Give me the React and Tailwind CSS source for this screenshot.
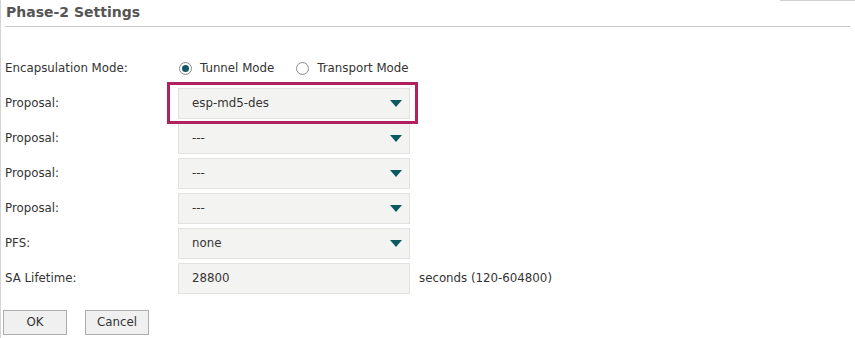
const font = { fontFamily: '"DejaVu Sans", Verdana, sans-serif' };

function Arrow() {
  return (
    <svg width="12" height="7" viewBox="0 0 12 7" className="shrink-0">
      <path d="M0 0 H12 L6 7 Z" fill="#0b5a61" />
    </svg>
  );
}

function Select({ value }) {
  return (
    <div className="flex h-[31px] w-[232px] items-center justify-between border border-[#e2e2e0] bg-[#f3f3f1] pl-[13px] pr-[7px]">
      <span>{value}</span>
      <Arrow />
    </div>
  );
}

function Radio({ checked, label }) {
  return (
    <label className="flex items-center gap-[8px]">
      <span className="flex h-[13px] w-[13px] items-center justify-center rounded-full border border-[#8a8a8a] bg-white">
        {checked && <span className="h-[7px] w-[7px] rounded-full bg-[#0d5a61]" />}
      </span>
      <span>{label}</span>
    </label>
  );
}

function Row({ label, children }) {
  return (
    <div className="flex h-[31px] items-center">
      <div className="w-[173px] shrink-0">{label}</div>
      {children}
    </div>
  );
}

export default function App() {
  return (
    <div className="h-[338px] w-[855px] overflow-hidden bg-white text-[11.8px] text-[#333]" style={font}>
      <div className="relative h-full border-l border-[#d4d4d4]">
        <div className="absolute right-0 top-0 h-px w-[75px] bg-[#d0d0d0]" />
        <div className="mx-[4px] mr-[5px] border-b border-[#c8c8c8] pb-[3px] pl-px pt-[2px] text-[14px] font-bold text-[#555]">
          Phase-2 Settings
        </div>
        <div className="flex flex-col gap-[4px] pl-[4px] pt-[26px]">
          <Row label="Encapsulation Mode:">
            <div className="flex items-center gap-[22px] pl-[1px]">
              <Radio checked label="Tunnel Mode" />
              <Radio label="Transport Mode" />
            </div>
          </Row>
          <Row label="Proposal:">
            <div className="relative">
              <Select value="esp-md5-des" />
              <div className="pointer-events-none absolute -left-[11px] -right-[8px] -top-[6px] -bottom-[5px] border-[3px] border-[#b0215f]" />
            </div>
          </Row>
          <Row label="Proposal:">
            <Select value="---" />
          </Row>
          <Row label="Proposal:">
            <Select value="---" />
          </Row>
          <Row label="Proposal:">
            <Select value="---" />
          </Row>
          <Row label="PFS:">
            <Select value="none" />
          </Row>
          <Row label="SA Lifetime:">
            <div className="flex h-[31px] w-[232px] items-center border border-[#e2e2e0] bg-[#f3f3f1] pl-[13px]">
              28800
            </div>
            <span className="ml-[9px]">seconds (120-604800)</span>
          </Row>
        </div>
        <div className="flex gap-[18px] pl-[2px] pt-[16px]">
          <button className="h-[25px] w-[64px] border border-[#adadad] bg-[#f0f0f0] text-[#333]">OK</button>
          <button className="h-[25px] w-[64px] border border-[#adadad] bg-[#f0f0f0] text-[#333]">Cancel</button>
        </div>
      </div>
    </div>
  );
}
